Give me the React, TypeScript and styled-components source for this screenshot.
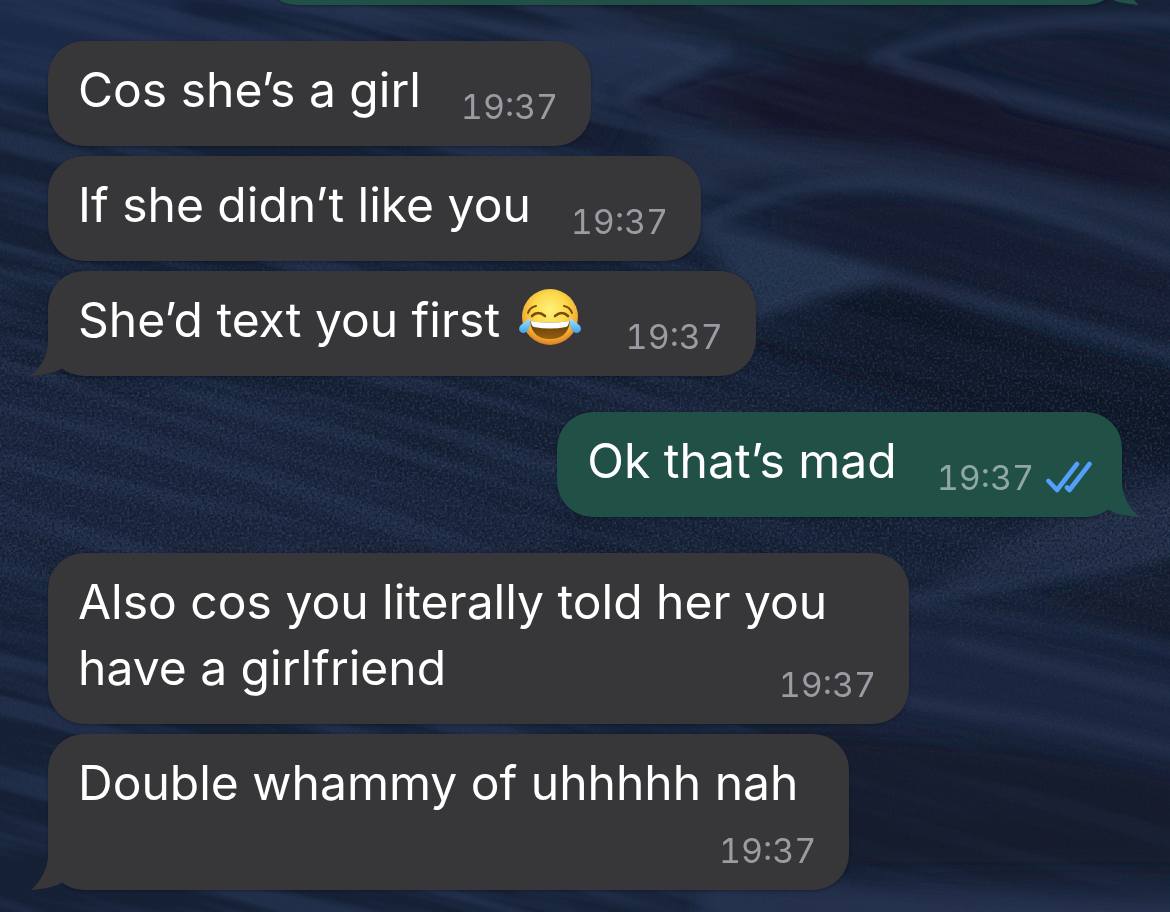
import React from 'react';
import styled, { createGlobalStyle, css } from 'styled-components';

const GlobalStyle = createGlobalStyle`
  *, *::before, *::after { box-sizing: border-box; }
  body {
    margin: 0;
    background: #17233b;
    font-family: Inter, "Liberation Sans", sans-serif;
  }
`;

const Screen = styled.main`
  position: relative;
  min-height: 100vh;
  overflow: hidden;
  background: #17233b;
`;

const WallpaperSvg = styled.svg`
  position: absolute;
  inset: 0;
  width: 100%;
  height: 100%;
`;

const Thread = styled.ol`
  position: relative;
  display: flex;
  flex-direction: column;
  gap: 36px;
  margin: 0;
  padding: 0 48px 22px;
  list-style: none;
`;

const Group = styled.li<{ $mine?: boolean }>`
  display: flex;
  flex-direction: column;
  align-items: ${(p) => (p.$mine ? 'flex-end' : 'flex-start')};
  gap: 10px;
`;

type Placement = 'beside' | 'tucked' | 'below';

const bubbleLayout = {
  beside: css`
    display: flex;
    align-items: flex-end;
    column-gap: 40px;
  `,
  tucked: css`
    display: flow-root;
    width: 100%;
    & > p { display: inline; }
    & > div {
      float: right;
      margin-top: 28px;
    }
  `,
  below: css`
    display: flex;
    flex-direction: column;
    row-gap: 13px;
    & > p { padding-right: 18px; }
  `,
};

const Bubble = styled.article<{ $mine?: boolean; $placement?: Placement; $previous?: boolean }>`
  position: relative;
  max-width: 861px;
  min-height: 105px;
  padding: 16px ${(p) => (p.$mine ? 30 : 33)}px 23px 30px;
  border-radius: 36px;
  color: #fff;
  background: ${(p) => (p.$mine ? '#215046' : '#373739')};
  box-shadow: 0 1px 3px rgba(5, 10, 24, 0.35);
  ${(p) => bubbleLayout[p.$placement ?? 'beside']}
  ${(p) => p.$previous && css`
    width: 100%;
    margin-top: -100px;
  `}
`;

const Message = styled.p`
  margin: 0;
  font-size: 48px;
  line-height: 66px;
`;

const Meta = styled.div`
  display: flex;
  align-items: center;
  align-self: flex-end;
  gap: 12px;
  height: 44px;
  margin-bottom: -6px;
`;

const Time = styled.time<{ $mine?: boolean }>`
  font-size: 34px;
  line-height: 44px;
  font-variant-numeric: tabular-nums;
  color: ${(p) => (p.$mine ? '#8fa8a2' : '#9c9ba3')};
`;

const TailSvg = styled.svg<{ $mine?: boolean }>`
  position: absolute;
  bottom: 0;
  ${(p) => (p.$mine ? 'right: -17px; transform: scaleX(-1);' : 'left: -17px;')}
  width: 54px;
  height: 46px;
  fill: ${(p) => (p.$mine ? '#215046' : '#373739')};
`;

const EmojiSvg = styled.svg`
  width: 64px;
  height: 60px;
  margin: 0 4px;
  vertical-align: -10px;
`;

const TicksSvg = styled.svg`
  width: 46px;
  height: 34px;
`;

const Tail = ({ mine }: { mine?: boolean }) => (
  <TailSvg $mine={mine} viewBox="0 0 54 46" aria-hidden="true">
    <path d="M17 0V10C17 25 10 37 0 46C13 45 24 43 32 38L40 30V0Z" />
  </TailSvg>
);

const Joy = () => (
  <EmojiSvg viewBox="0 0 64 60" role="img" aria-label="Face with tears of joy">
    <defs>
      <radialGradient id="face" cx="50%" cy="38%" r="62%">
        <stop offset="0" stopColor="#fff27a" />
        <stop offset=".5" stopColor="#fcd84a" />
        <stop offset=".8" stopColor="#f3ad35" />
        <stop offset="1" stopColor="#db7d20" />
      </radialGradient>
      <linearGradient id="tear" x1="0" y1="0" x2="0" y2="1">
        <stop offset="0" stopColor="#a9e5fb" />
        <stop offset="1" stopColor="#39a4e8" />
      </linearGradient>
      <linearGradient id="mouth" x1="0" y1="0" x2="0" y2="1">
        <stop offset="0" stopColor="#5d3407" />
        <stop offset="1" stopColor="#94600f" />
      </linearGradient>
    </defs>
    <circle cx="32" cy="30" r="28" fill="url(#face)" />
    <g fill="none" stroke="#7b4a0d" strokeLinecap="round">
      <path d="M10 26Q12 20 18 19M54 26Q52 20 46 19" strokeWidth="2" />
      <path d="M14 29Q20 23 27 29M37 29Q44 23 50 29" strokeWidth="2.6" />
    </g>
    <path d="M12 34Q32 37 52 34Q50 52 32 52Q14 52 12 34Z" fill="url(#mouth)" />
    <path d="M13 34Q32 37 51 34Q51 39 48 40Q32 43 16 40Q13 39 13 34Z" fill="#fff" />
    <path d="M12 31C14 38 10 46 5 46C0 45 0 40 4 37Q8 34 12 31Z" fill="url(#tear)" />
    <path d="M52 31C50 38 54 46 59 46C64 45 64 40 60 37Q56 34 52 31Z" fill="url(#tear)" />
  </EmojiSvg>
);

const ReadTicks = () => (
  <TicksSvg viewBox="0 0 46 34" role="img" aria-label="Read">
    <path
      d="M2.500 20L11 29L31 3M21 26.500L23.500 29L43.500 3"
      fill="none"
      stroke="#53a0fb"
      strokeWidth="4.600"
      strokeLinecap="round"
      strokeLinejoin="round"
    />
  </TicksSvg>
);

const Wallpaper = () => (
  <WallpaperSvg viewBox="0 0 1170 912" preserveAspectRatio="xMidYMid slice" aria-hidden="true">
    <defs>
      <filter id="soft" x="-20%" y="-20%" width="140%" height="140%">
        <feGaussianBlur stdDeviation="6" />
      </filter>
      <filter id="haze" x="-20%" y="-20%" width="140%" height="140%">
        <feGaussianBlur stdDeviation="10" />
      </filter>
      <filter id="ripple" x="0" y="0" width="100%" height="100%" colorInterpolationFilters="sRGB">
        <feTurbulence type="fractalNoise" baseFrequency="0.003 0.045" numOctaves="3" seed="11" />
        <feColorMatrix values="0 0 0 0 .155  0 0 0 0 .215  0 0 0 0 .33  3.4 0 0 0 -1.3" />
      </filter>
      <filter id="grain" x="0" y="0" width="100%" height="100%" colorInterpolationFilters="sRGB">
        <feTurbulence type="fractalNoise" baseFrequency="0.4" numOctaves="3" seed="4" />
        <feColorMatrix values="0 0 0 0 .22  0 0 0 0 .28  0 0 0 0 .39  3 0 0 0 -1.4" />
      </filter>
      <filter id="shade" x="0" y="0" width="100%" height="100%" colorInterpolationFilters="sRGB">
        <feTurbulence type="fractalNoise" baseFrequency="0.4" numOctaves="3" seed="9" />
        <feColorMatrix values="0 0 0 0 .05  0 0 0 0 .08  0 0 0 0 .13  3 0 0 0 -1.2" />
      </filter>
      <linearGradient id="focus" x1="0" y1="0" x2="0" y2="1">
        <stop offset="0" stopColor="#fff" stopOpacity=".05" />
        <stop offset=".25" stopColor="#fff" stopOpacity=".15" />
        <stop offset=".42" stopColor="#fff" stopOpacity=".55" />
        <stop offset=".6" stopColor="#fff" stopOpacity=".6" />
        <stop offset=".72" stopColor="#fff" stopOpacity=".15" />
        <stop offset="1" stopColor="#fff" stopOpacity=".05" />
      </linearGradient>
      <linearGradient id="leftward" x1="0" y1="0" x2="1" y2="0">
        <stop offset=".45" stopColor="#fff" />
        <stop offset=".75" stopColor="#fff" stopOpacity=".25" />
      </linearGradient>
      <mask id="focusBand"><rect width="1170" height="912" fill="url(#focus)" /></mask>
      <mask id="rippleArea"><rect width="1170" height="912" fill="url(#leftward)" /></mask>
    </defs>
    <rect width="1170" height="912" fill="#162136" />
    <g filter="url(#haze)">
      <path d="M-20 -20H260L500 60L300 120L-20 90Z" fill="#1e2b48" />
      <path d="M-20 380L200 400L560 520L560 560H-20Z" fill="#1a2740" />
      <path d="M180 0Q420 20 620 110L600 150Q360 40 180 20Z" fill="#141d31" />
      <path d="M560 30L730 50L600 100L560 130Z" fill="#222f4b" />
      <path d="M620 0H960L860 60Q720 50 620 25Z" fill="#192236" />
      <path d="M620 110Q740 50 860 60T1010 110L1190 150V190Q980 200 860 160T620 110Z" fill="#12192a" />
      <path d="M950 45Q1060 15 1190 50V110Q1060 90 950 45Z" fill="#151e31" />
      <path d="M650 135Q860 130 1190 210V250Q1000 190 830 180T700 230Z" fill="#212e47" />
      <path d="M780 210Q900 180 1030 225L1190 275V340Q1000 300 780 240Z" fill="#151e30" />
      <path d="M700 228Q800 250 890 276L750 312Z" fill="#283753" />
      <path d="M750 325Q870 265 960 305T1190 375V490L1000 430L750 345Z" fill="#111828" />
      <path d="M930 590Q1060 500 1190 480V545Q1060 570 930 590Z" fill="#26334d" />
      <path d="M1040 605L1190 560V640Q1100 630 1040 605Z" fill="#121b2d" />
      <path d="M700 600Q1000 620 1190 680V770Q1000 720 700 700Z" fill="#1c2840" />
      <path d="M700 735Q1000 730 1190 780V870H700Z" fill="#131c2f" />
      <path d="M700 880L1190 900V940H700Z" fill="#26334f" />
    </g>
    <g mask="url(#rippleArea)">
      <rect
        x="-400"
        y="-500"
        width="1900"
        height="1800"
        transform="rotate(15 585 456)"
        filter="url(#ripple)"
        opacity=".7"
      />
    </g>
    <g filter="url(#soft)" fill="none" stroke="#2e3d5b" strokeWidth="12" opacity=".7">
      <path d="M340 5Q520 30 700 52M620 98Q680 70 730 50" />
      <path d="M870 60Q1000 10 1180 22M890 62Q1010 100 1190 135" />
      <path d="M700 228Q770 180 880 182T1190 265" />
      <path d="M700 230Q820 260 900 280T1190 360" />
      <path d="M750 312Q850 270 900 278" />
      <path d="M900 600Q1040 580 1190 545" />
      <path d="M900 605Q1060 622 1190 655M950 640Q1080 675 1190 698M900 700Q1060 720 1190 755" opacity=".7" />
    </g>
    <rect width="1170" height="912" filter="url(#shade)" mask="url(#focusBand)" />
    <rect width="1170" height="912" filter="url(#grain)" mask="url(#focusBand)" />
  </WallpaperSvg>
);

type Text = { body: React.ReactNode; placement?: Placement };
type Run = { mine?: boolean; items: Text[] };

const runs: Run[] = [
  {
    items: [
      { body: 'Cos she’s a girl' },
      { body: 'If she didn’t like you' },
      { body: <>She’d text you first <Joy /></> },
    ],
  },
  { mine: true, items: [{ body: 'Ok that’s mad' }] },
  {
    items: [
      { body: 'Also cos you literally told her you have a girlfriend', placement: 'tucked' },
      { body: 'Double whammy of uhhhhh nah', placement: 'below' },
    ],
  },
];

export default function App() {
  return (
    <Screen>
      <GlobalStyle />
      <Wallpaper />
      <Thread>
        <Group $mine>
          <Bubble $mine $previous>
            <Tail mine />
          </Bubble>
        </Group>
        {runs.map((run, r) => (
          <Group key={r} $mine={run.mine}>
            {run.items.map((item, i) => (
              <Bubble key={i} $mine={run.mine} $placement={item.placement}>
                {i === run.items.length - 1 && <Tail mine={run.mine} />}
                <Message>{item.body}</Message>
                <Meta>
                  <Time $mine={run.mine}>19:37</Time>
                  {run.mine && <ReadTicks />}
                </Meta>
              </Bubble>
            ))}
          </Group>
        ))}
      </Thread>
    </Screen>
  );
}
